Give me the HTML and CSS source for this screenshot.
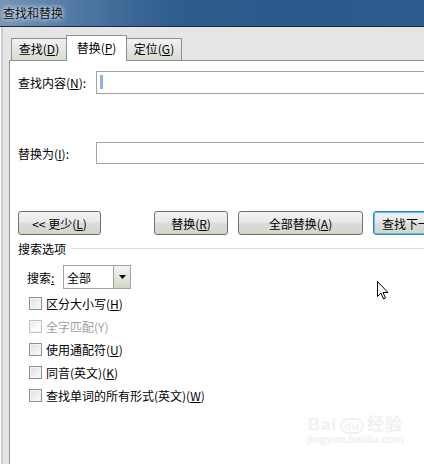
FILE: index.html
```html
<!DOCTYPE html>
<html lang="zh-CN">
<head>
    <meta charset="UTF-8">
    <title>查找和替换</title>
    <link rel="stylesheet" href="styles.css">
</head>
<body>
    <div class="window">
        <!-- Title bar -->
        <div class="titlebar">
            <span class="title">查找和替换</span>
        </div>

        <div class="dialog">
            <!-- Tabs -->
            <div class="tabs">
                <span class="tab">查找(<u>D</u>)</span>
                <span class="tab active">替换(<u>P</u>)</span>
                <span class="tab">定位(<u>G</u>)</span>
            </div>

            <div class="pane">
                <div class="field-row first">
                    <span class="label">查找内容(<u>N</u>):</span>
                    <div class="input"><span class="caret"></span></div>
                </div>
                <div class="field-row second">
                    <span class="label">替换为(<u>I</u>):</span>
                    <div class="input"></div>
                </div>

                <div class="buttons">
                    <span class="btn btn-less">&lt;&lt; 更少(<u>L</u>)</span>
                    <span class="btn btn-replace">替换(<u>R</u>)</span>
                    <span class="btn btn-all">全部替换(<u>A</u>)</span>
                    <span class="btn btn-next">查找下一处(<u>F</u>)</span>
                </div>

                <div class="group-title">
                    <span>搜索选项</span>
                    <span class="group-line"></span>
                </div>

                <div class="search-row">
                    <span class="search-label">搜索<u>:</u></span>
                    <div class="select">
                        <span class="select-value">全部</span>
                        <span class="select-btn">
                            <svg width="7" height="4" viewBox="0 0 7 4"><path d="M0 0h7L3.5 4z" fill="#000"/></svg>
                        </span>
                    </div>
                </div>

                <div class="options">
                    <div class="option"><span class="check"></span>区分大小写(<u>H</u>)</div>
                    <div class="option disabled"><span class="check"></span>全字匹配(Y)</div>
                    <div class="option"><span class="check"></span>使用通配符(<u>U</u>)</div>
                    <div class="option"><span class="check"></span>同音(英文)(<u>K</u>)</div>
                    <div class="option"><span class="check"></span>查找单词的所有形式(英文)(<u>W</u>)</div>
                </div>
            </div>
        </div>

        <!-- mouse pointer -->
        <svg class="pointer" width="13" height="20" viewBox="0 0 13 20">
            <path d="M0.5 0.5v15l3.5-3.5 2.5 6 2-1-2.5-5.5h5z" fill="#fff" stroke="#000" stroke-width="1"/>
        </svg>

        <!-- watermark -->
        <div class="watermark">
            <div class="wm-top">Bai<span class="wm-paw">du</span>经验</div>
            <div class="wm-url">jingyan.baidu.com</div>
        </div>
    </div>
</body>
</html>
```

FILE: styles.css
```css
html, body {
    margin: 0;
    padding: 0;
    overflow: hidden;
}

body {
    font-family: "Noto Sans CJK SC", "Liberation Sans", sans-serif;
    font-size: 12px;
    color: #000;
    background: #fff;
}

u {
    text-decoration: underline;
    text-underline-offset: 1px;
}

.window {
    position: relative;
    width: 424px;
    height: 464px;
    overflow: hidden;
}

.titlebar {
    height: 26px;
    display: flex;
    align-items: center;
    padding-left: 3px;
    background: linear-gradient(to right, #7896b8 0, #4f78a4 18%, #2f5d8e 40%, #2b598b 70%, #2e5c8e 100%);
    border-bottom: 1px solid #1d2a38;
}

.title {
    font-size: 12px;
    color: #111;
    text-shadow: 0 0 4px #dfe8f2, 0 0 6px #dfe8f2;
    margin-top: -1px;
}

.dialog {
    height: 437px;
    background: #e5e5e5;
    border-left: 1px solid #fff;
    box-shadow: inset 2px 0 0 #c8ccd0;
    padding-left: 8px;
    padding-top: 8px;
    box-sizing: border-box;
}

.tabs {
    display: flex;
    align-items: flex-end;
    height: 25px;
    padding-left: 2px;
}

.tab {
    height: 22px;
    box-sizing: border-box;
    border: 1px solid #8d9091;
    border-bottom: none;
    background: linear-gradient(#f2f2f2, #e4e6e2 50%, #d6dccd);
    padding-top: 1px;
    line-height: 18px;
    width: 56px;
    text-align: center;
    white-space: nowrap;
    margin-right: -1px;
}

.tab.active {
    position: relative;
    z-index: 1;
    height: 26px;
    width: 61px;
    background: #fff;
    margin-bottom: -1px;
    padding-top: 3px;
}

.pane {
    background: #fff;
    border-top: 1px solid #8d9091;
    border-left: 1px solid #8d9091;
    height: 410px;
    padding-left: 8px;
    box-sizing: border-box;
}

.field-row {
    display: flex;
    align-items: center;
}

.field-row.first {
    margin-top: 10px;
}

.field-row.second {
    margin-top: 48px;
}

.label {
    width: 78px;
    flex-shrink: 0;
}

.input {
    flex: 1;
    height: 23px;
    box-sizing: border-box;
    border: 1px solid #a3a3a3;
    border-right: none;
    position: relative;
}

.second .input {
    height: 22px;
}

.caret {
    position: absolute;
    left: 3px;
    top: 3px;
    width: 3px;
    height: 14px;
    background: #8fb2de;
}

.buttons {
    display: flex;
    margin-top: 47px;
    height: 24px;
}

.btn {
    height: 24px;
    box-sizing: border-box;
    border: 1px solid #707070;
    border-radius: 3px;
    background: linear-gradient(#f2f2f2, #e9e9e9 45%, #dcdcdc 50%, #cfd8c4);
    display: flex;
    align-items: center;
    justify-content: center;
    white-space: nowrap;
    flex-shrink: 0;
}

.btn-less {
    width: 83px;
}

.btn-replace {
    width: 74px;
    margin-left: 53px;
}

.btn-all {
    width: 125px;
    margin-left: 10px;
}

.btn-next {
    width: 100px;
    margin-left: 10px;
    border: 1px solid #3c7fb1;
    box-shadow: inset 0 0 0 1px #4fc3f2;
    justify-content: flex-start;
    padding-left: 8px;
}

.group-title {
    display: flex;
    align-items: center;
    margin-top: 5px;
    height: 16px;
}

.group-line {
    flex: 1;
    height: 1px;
    background: #d5dfe5;
    margin-left: 5px;
    margin-top: 1px;
}

.search-row {
    display: flex;
    align-items: center;
    margin-top: 9px;
    padding-left: 9px;
}

.search-label {
    width: 36px;
}

.select {
    width: 68px;
    height: 24px;
    box-sizing: border-box;
    border: 1px solid #a3a3a3;
    display: flex;
    align-items: center;
}

.select-value {
    flex: 1;
    padding-left: 3px;
}

.select-btn {
    width: 17px;
    height: 22px;
    box-sizing: border-box;
    border-left: 1px solid #a3a3a3;
    background: linear-gradient(#f2f2f2, #e4e6e2 50%, #cdd8c1);
    display: flex;
    align-items: center;
    justify-content: center;
}

.options {
    margin-top: 3px;
    padding-left: 11px;
}

.option {
    display: flex;
    align-items: center;
    height: 23px;
}

.check {
    width: 13px;
    height: 13px;
    box-sizing: border-box;
    border: 1px solid #8e8f8f;
    background: linear-gradient(135deg, #dcdcdc, #f4f4f4 70%, #fbfbfb);
    box-shadow: inset 0 0 0 1px #f4f4f4;
    margin-right: 4px;
}

.option.disabled {
    color: #a0a0a0;
}

.option.disabled .check {
    border-color: #c4c4c4;
    background: linear-gradient(135deg, #e8e8e8, #fbfbfb 60%);
}

.pointer {
    position: absolute;
    left: 377px;
    top: 281px;
}

.watermark {
    position: absolute;
    left: 307px;
    top: 410px;
    color: #f0f0f0;
    font-family: "Liberation Sans", sans-serif;
    text-align: center;
}

.wm-top {
    font-size: 17px;
    font-weight: bold;
    letter-spacing: 1px;
}

.wm-paw {
    display: inline-block;
    font-size: 11px;
    border: 2px solid #f0f0f0;
    border-radius: 8px;
    padding: 0 2px;
    margin: 0 3px;
}

.wm-url {
    font-size: 11px;
    font-weight: bold;
    margin-top: -2px;
}
```
